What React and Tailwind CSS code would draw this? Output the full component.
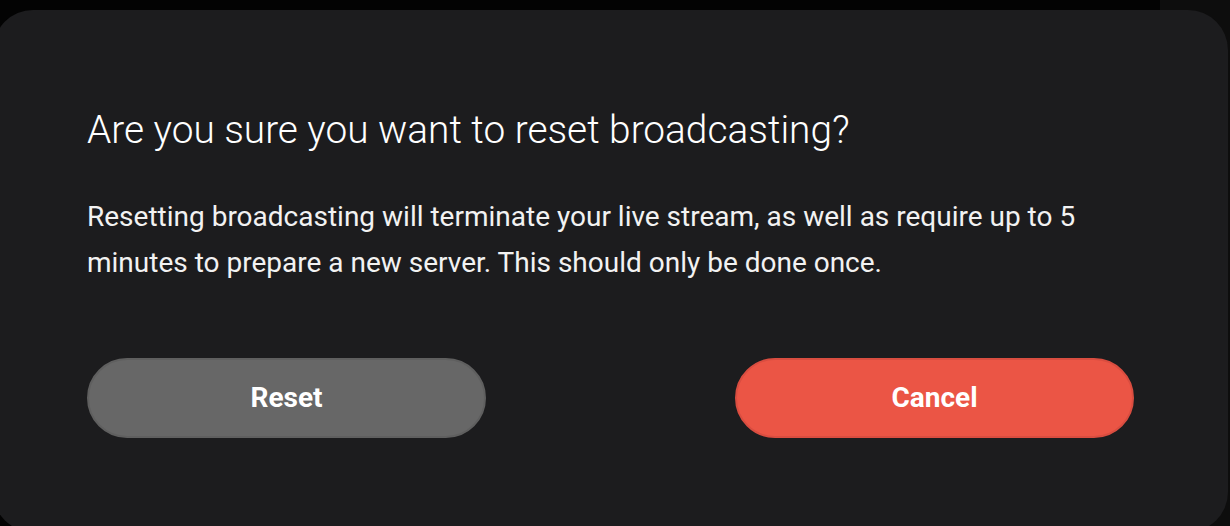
// Dialogo de confirmacion: reset broadcasting.
export default function App() {
  return (
    <div className="relative h-[526px] w-[1230px] overflow-hidden bg-[#030303] font-['Roboto',sans-serif]">
      {/* franja derecha algo mas clara detras del dialogo */}
      <div className="absolute right-0 top-0 h-full w-[70px] bg-[#0d0d0d]" />
      <div className="relative ml-[-7px] mt-[10px] flex h-[522px] w-[1235px] flex-col rounded-[40px] bg-[#1c1c1e] px-[94px] pt-[97px]">
        <h1 className="text-[38.8px] font-light leading-[1.2] text-white">
          Are you sure you want to reset broadcasting?
        </h1>
        <p className="mt-[40px] text-[28px] leading-[46px] text-[#f2f2f2]">
          Resetting broadcasting will terminate your live stream, as well as require up to 5 minutes to prepare a new server. This should only be done once.
        </p>
        <div className="mt-[72px] flex justify-between">
          <button
            type="button"
            className="h-[80px] w-[399px] rounded-full border-2 border-[#5f5f5f] bg-[#676767] text-[28px] font-bold text-white"
          >
            Reset
          </button>
          <button
            type="button"
            className="h-[80px] w-[399px] rounded-full border-2 border-[#d94d40] bg-[#eb5545] text-[28px] font-bold text-white"
          >
            Cancel
          </button>
        </div>
      </div>
    </div>
  )
}
